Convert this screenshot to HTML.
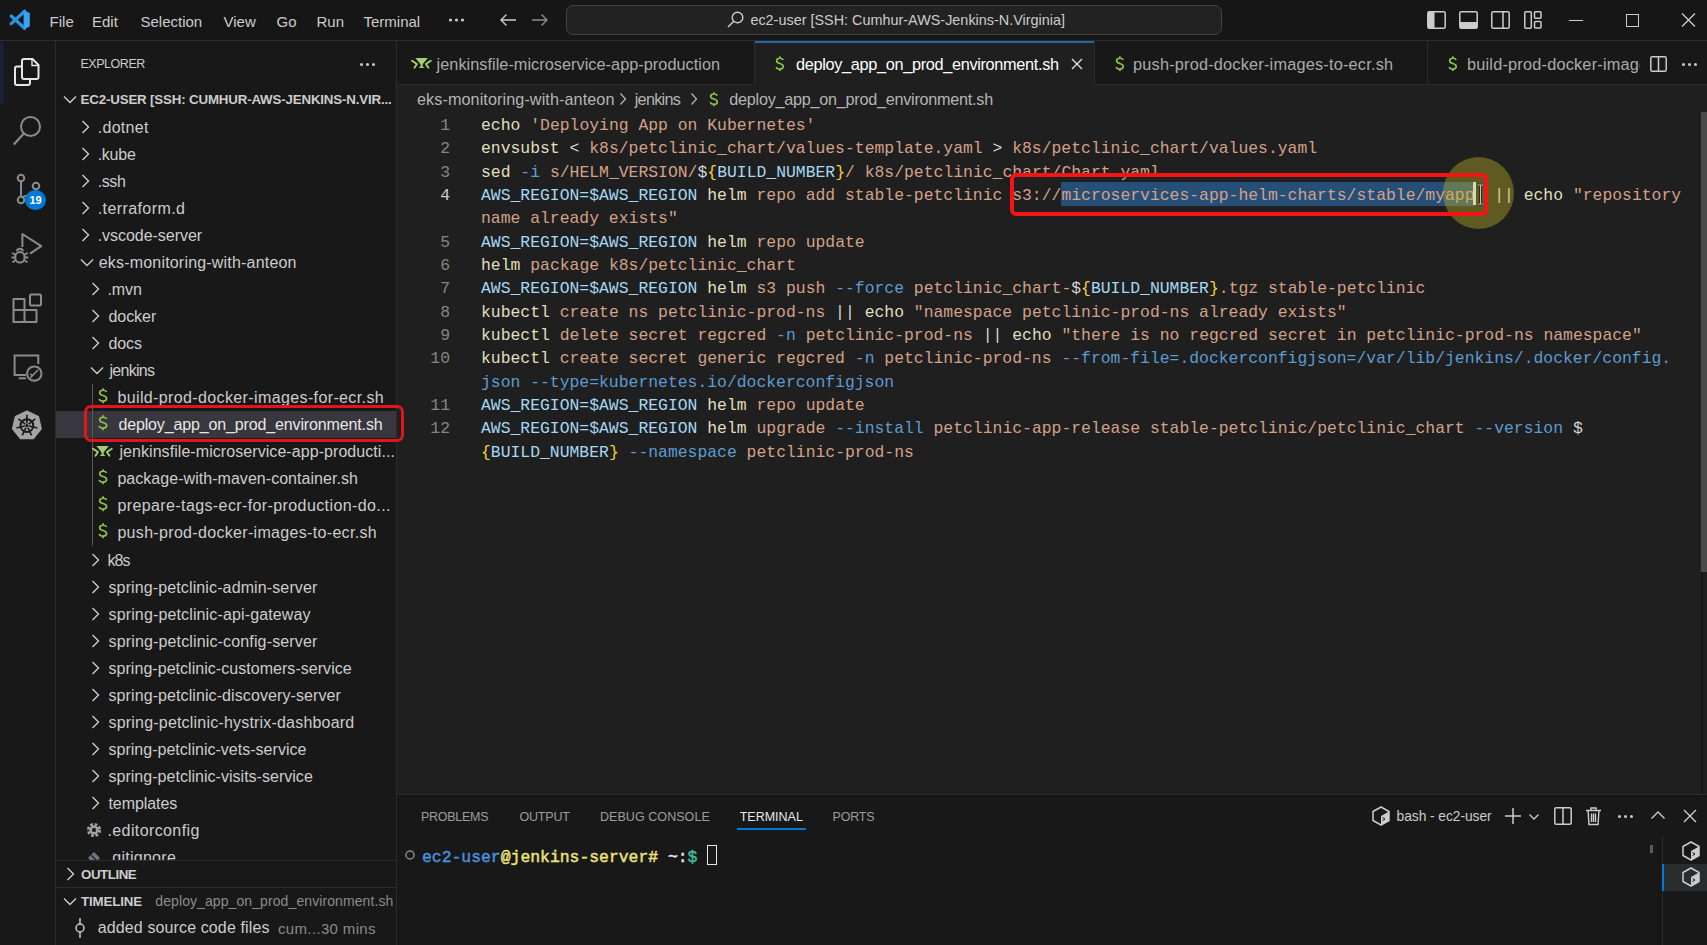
<!DOCTYPE html><html><head><meta charset="utf-8"><style>
*{margin:0;padding:0;box-sizing:border-box}
html,body{width:1707px;height:945px;overflow:hidden;background:#1f1f1f;font-family:"Liberation Sans",sans-serif;color:#cccccc}
.a{position:absolute;white-space:nowrap}
svg.a{overflow:visible}
#title{left:0;top:0;width:1707px;height:41px;background:#161616;border-bottom:1px solid #2b2b2b}
#act{left:0;top:41px;width:56px;height:904px;background:#181818;border-right:1px solid #2b2b2b}
#side{left:56px;top:41px;width:341px;height:904px;background:#181818;border-right:1px solid #2b2b2b}
#tabs{left:397px;top:41px;width:1310px;height:44px;background:#181818;border-bottom:1px solid #2b2b2b}
#panel{left:397px;top:794px;width:1310px;height:151px;background:#181818;border-top:1px solid #2e2e2e;box-shadow:inset 0 1px 0 #121212}
.menu{top:11px;font-size:15px;line-height:17px;color:#cccccc}
.code{font-family:"Liberation Mono",monospace;font-size:16.4px;line-height:23.36px;height:23.36px;white-space:pre}
.ln{color:#6e7681;text-align:right;width:60px;font-family:"Liberation Mono",monospace;font-size:16.4px;line-height:23.36px}
.tr{font-size:16px;line-height:20px;color:#cccccc;letter-spacing:0.15px}
.Y{color:#e0dfbe}.O{color:#d3a189}.B{color:#a4d8f4}.K{color:#5d9bd2}.W{color:#d8d8d8}.G{color:#f2d040}
.ptab{font-size:12.2px;line-height:14px;color:#9d9d9d;top:810px}
.tab{font-size:16.4px;line-height:20px;color:#ababab;top:54px}
.dl{color:#8dc149;font-size:16px;font-weight:bold}
</style></head><body>
<div id="title" class="a"></div><div id="act" class="a"></div><div id="side" class="a"></div><div id="tabs" class="a"></div><div id="panel" class="a"></div>
<svg class="a" style="left:0;top:0" width="45" height="40" viewBox="0 0 45 40"><path d="M24.6 11.2L11.2 23.6M11.2 16L24.6 28.3" stroke="#2d93e0" stroke-width="3.3" stroke-linecap="round"/><path d="M23.6 10.2L29.8 13.1V26.4L23.6 29.3Z" fill="#36a3f0"/></svg>
<div class="a " style='left:49.60px;top:11.70px;font-size:15px;line-height:19px;color:#cccccc'>File</div>
<div class="a " style='left:92.00px;top:11.70px;font-size:15px;line-height:19px;color:#cccccc'>Edit</div>
<div class="a " style='left:140.50px;top:11.70px;font-size:15px;line-height:19px;color:#cccccc'>Selection</div>
<div class="a " style='left:223.50px;top:11.70px;font-size:15px;line-height:19px;color:#cccccc'>View</div>
<div class="a " style='left:276.50px;top:11.70px;font-size:15px;line-height:19px;color:#cccccc'>Go</div>
<div class="a " style='left:316.50px;top:11.70px;font-size:15px;line-height:19px;color:#cccccc'>Run</div>
<div class="a " style='left:363.50px;top:11.70px;font-size:15px;line-height:19px;color:#cccccc'>Terminal</div>
<svg class="a" style="left:448px;top:17px" width="18" height="6"><circle cx="2.5" cy="3" r="1.6" fill="#ccc"/><circle cx="8.5" cy="3" r="1.6" fill="#ccc"/><circle cx="14.5" cy="3" r="1.6" fill="#ccc"/></svg>
<svg class="a" style="left:499px;top:13px" width="18" height="14" viewBox="0 0 18 14"><path d="M17 7H2M7.5 1.5L2 7l5.5 5.5" stroke="#cccccc" stroke-width="1.4" fill="none"/></svg>
<svg class="a" style="left:531px;top:13px" width="18" height="14" viewBox="0 0 18 14"><path d="M1 7h15M10.5 1.5L16 7l-5.5 5.5" stroke="#8a8a8a" stroke-width="1.4" fill="none"/></svg>
<div class="a" style="left:566px;top:5px;width:656px;height:30px;border:1.3px solid #424242;border-radius:7px;background:#222222"></div>
<svg class="a" style="left:727px;top:11px" width="17" height="17" viewBox="0 0 17 17"><circle cx="10.5" cy="6.5" r="5.3" stroke="#cccccc" stroke-width="1.4" fill="none"/><path d="M6.8 10.2L1 16" stroke="#cccccc" stroke-width="1.5"/></svg>
<div class="a " style='left:750.40px;top:11.31px;font-size:14.4px;line-height:18px;color:#cccccc;letter-spacing:0.007px'>ec2-user [SSH: Cumhur-AWS-Jenkins-N.Virginia]</div>
<svg class="a" style="left:1427px;top:11px" width="19" height="18" viewBox="0 0 19 18"><rect x="0.8" y="0.8" width="17.4" height="16.4" rx="1.5" stroke="#ccc" stroke-width="1.5" fill="none"/><rect x="1" y="1" width="6.5" height="16" fill="#ccc"/></svg>
<svg class="a" style="left:1459px;top:11px" width="19" height="18" viewBox="0 0 19 18"><rect x="0.8" y="0.8" width="17.4" height="16.4" rx="1.5" stroke="#ccc" stroke-width="1.5" fill="none"/><rect x="1" y="11" width="17" height="6" fill="#ccc"/></svg>
<svg class="a" style="left:1491px;top:11px" width="19" height="18" viewBox="0 0 19 18"><rect x="0.8" y="0.8" width="17.4" height="16.4" rx="1.5" stroke="#ccc" stroke-width="1.5" fill="none"/><path d="M12 1v16" stroke="#ccc" stroke-width="1.5"/></svg>
<svg class="a" style="left:1524px;top:11px" width="18" height="18" viewBox="0 0 18 18"><rect x="0.8" y="0.8" width="6.5" height="16.4" rx="1" stroke="#ccc" stroke-width="1.5" fill="none"/><rect x="10.5" y="0.8" width="6.5" height="6.5" rx="1" stroke="#ccc" stroke-width="1.5" fill="none"/><rect x="10.5" y="10.5" width="6.5" height="6.5" rx="1" stroke="#ccc" stroke-width="1.5" fill="none"/></svg>
<div class="a" style="left:1569px;top:20px;width:14px;height:1.3px;background:#ccc"></div>
<div class="a" style="left:1626px;top:13.5px;width:13px;height:13px;border:1.3px solid #ccc"></div>
<svg class="a" style="left:1681px;top:13px" width="15" height="14" viewBox="0 0 15 14"><path d="M1 0.5L14 13.5M14 0.5L1 13.5" stroke="#ccc" stroke-width="1.3"/></svg>
<div class="a" style="left:0;top:42px;width:5px;height:62px;background:linear-gradient(90deg,#15243d,#17202c 60%,#181818)"></div>
<svg class="a" style="left:13px;top:57px" width="28" height="30" viewBox="0 0 28 30"><path d="M9 20V4a2 2 0 0 1 2-2h8.5l6 6v12a2 2 0 0 1-2 2H11a2 2 0 0 1-2-2z" stroke="#e6e6e6" stroke-width="2" fill="none"/><path d="M19 2.5v6h6" stroke="#e6e6e6" stroke-width="1.4" fill="none"/><path d="M9 9.5H4a2 2 0 0 0-2 2V26a2 2 0 0 0 2 2h11a2 2 0 0 0 2-2v-4" stroke="#e6e6e6" stroke-width="2" fill="none"/></svg>
<svg class="a" style="left:13px;top:115px" width="30" height="32" viewBox="0 0 30 32"><circle cx="17.5" cy="11.5" r="9.5" stroke="#8b8b8b" stroke-width="2" fill="none"/><path d="M10.8 18.5L0.8 29.5" stroke="#8b8b8b" stroke-width="2.2"/></svg>
<svg class="a" style="left:15px;top:173px" width="30" height="32" viewBox="0 0 30 32"><circle cx="6" cy="5" r="3.3" stroke="#8b8b8b" stroke-width="2" fill="none"/><circle cx="6" cy="27" r="3.3" stroke="#8b8b8b" stroke-width="2" fill="none"/><circle cx="21" cy="13" r="3.3" stroke="#8b8b8b" stroke-width="2" fill="none"/><path d="M6 8.5v15M21 16.5c0 6-10 5-14 8" stroke="#8b8b8b" stroke-width="2" fill="none"/></svg>
<div class="a" style="left:25px;top:190px;width:21px;height:20px;border-radius:10px;background:#0078d4;color:#fff;font-size:11px;line-height:20px;text-align:center;font-weight:bold">19</div>
<svg class="a" style="left:0;top:225px" width="56" height="42" viewBox="0 0 56 42"><path d="M22.4 22V9L41.3 21.2L30 28.6" stroke="#8b8b8b" stroke-width="2" fill="none" stroke-linejoin="round"/><path d="M17 26.3c0-1.6 1.3-2.6 2.9-2.6s2.9 1 2.9 2.6" stroke="#8b8b8b" stroke-width="2" fill="none"/><rect x="15.3" y="27" width="9.2" height="10.6" rx="4.6" stroke="#8b8b8b" stroke-width="2" fill="none"/><path d="M12 28l3.4 1.6M27.8 28l-3.4 1.6M11.5 32.5h3.8M24.5 32.5h3.8M12.3 37.2l3-1.8M27.5 37.2l-3-1.8" stroke="#8b8b8b" stroke-width="1.8"/></svg>
<svg class="a" style="left:12px;top:292px" width="32" height="32" viewBox="0 0 32 32"><path d="M1.5 7h11v11h12v12H1.5z M1.5 18h11v12" stroke="#8b8b8b" stroke-width="2" fill="none" stroke-linejoin="round"/><rect x="18" y="2.5" width="11" height="11" rx="1" stroke="#8b8b8b" stroke-width="2" fill="none"/></svg>
<svg class="a" style="left:0;top:345px" width="56" height="45" viewBox="0 0 56 45"><path d="M26 30H14.6V10.5h23.7V19" stroke="#8b8b8b" stroke-width="2" fill="none"/><path d="M18.6 33.3H26" stroke="#8b8b8b" stroke-width="2"/><circle cx="34.3" cy="28.6" r="7.2" stroke="#8b8b8b" stroke-width="2" fill="none"/><path d="M30.5 32.5l7.5-7.5M30.3 28.8l2.2 1.8-2 2" stroke="#8b8b8b" stroke-width="1.6" fill="none"/></svg>
<svg class="a" style="left:0;top:400px" width="56" height="50" viewBox="0 0 56 50"><polygon points="26.90,11.29 38.31,16.68 41.13,28.78 33.23,38.49 20.57,38.49 12.67,28.78 15.49,16.68" fill="#a3a3a3" stroke="#a3a3a3" stroke-width="1.5" stroke-linejoin="round"/><circle cx="26.9" cy="25.600000000000023" r="6.4" stroke="#1a1a1a" stroke-width="2" fill="none"/><path d="M26.90 23.40L26.90 14.80M28.62 24.23L35.34 18.87M29.04 26.09L37.43 28.00M27.85 27.58L31.59 35.33M25.95 27.58L22.21 35.33M24.76 26.09L16.37 28.00M25.18 24.23L18.46 18.87" stroke="#1a1a1a" stroke-width="1.6"/><circle cx="26.9" cy="25.600000000000023" r="1.6" fill="#1a1a1a"/></svg>
<div class="a " style='left:80.40px;top:56.37px;font-size:12.5px;line-height:16px;color:#cccccc;letter-spacing:-0.450px'>EXPLORER</div>
<svg class="a" style="left:359px;top:62px" width="18" height="5"><circle cx="2.5" cy="2.5" r="1.5" fill="#ccc"/><circle cx="8.5" cy="2.5" r="1.5" fill="#ccc"/><circle cx="14.5" cy="2.5" r="1.5" fill="#ccc"/></svg>
<svg class="a" style="left:63px;top:95px" width="14" height="9" viewBox="0 0 14 9"><path d="M1 1.5l6 6 6-6" stroke="#cccccc" stroke-width="1.4" fill="none"/></svg>
<div class="a " style='left:80.60px;top:90.69px;font-size:13.3px;line-height:17px;color:#cccccc;font-weight:bold;letter-spacing:-0.160px'>EC2-USER [SSH: CUMHUR-AWS-JENKINS-N.VIR...</div>
<div class="a" style="left:56px;top:85px;width:340px;height:775px;overflow:hidden">
<div class="a" style="left:0;top:325.9px;width:340px;height:27px;background:#37373d"></div>
<div class="a" style="left:36px;top:298.9px;width:1px;height:162.2px;background:#585858"></div>
<svg class="a" style="left:25px;top:35.0px" width="9" height="14" viewBox="0 0 9 14"><path d="M1.5 1l6 6-6 6" stroke="#cccccc" stroke-width="1.4" fill="none"/></svg>
<div class="a " style='left:41.70px;top:32.86px;font-size:16px;line-height:20px;color:#cccccc;letter-spacing:0.303px'>.dotnet</div>
<svg class="a" style="left:25px;top:62.0px" width="9" height="14" viewBox="0 0 9 14"><path d="M1.5 1l6 6-6 6" stroke="#cccccc" stroke-width="1.4" fill="none"/></svg>
<div class="a " style='left:41.70px;top:59.90px;font-size:16px;line-height:20px;color:#cccccc;letter-spacing:-0.261px'>.kube</div>
<svg class="a" style="left:25px;top:89.1px" width="9" height="14" viewBox="0 0 9 14"><path d="M1.5 1l6 6-6 6" stroke="#cccccc" stroke-width="1.4" fill="none"/></svg>
<div class="a " style='left:41.70px;top:86.94px;font-size:16px;line-height:20px;color:#cccccc;letter-spacing:-0.382px'>.ssh</div>
<svg class="a" style="left:25px;top:116.1px" width="9" height="14" viewBox="0 0 9 14"><path d="M1.5 1l6 6-6 6" stroke="#cccccc" stroke-width="1.4" fill="none"/></svg>
<div class="a " style='left:41.70px;top:113.98px;font-size:16px;line-height:20px;color:#cccccc;letter-spacing:0.410px'>.terraform.d</div>
<svg class="a" style="left:25px;top:143.2px" width="9" height="14" viewBox="0 0 9 14"><path d="M1.5 1l6 6-6 6" stroke="#cccccc" stroke-width="1.4" fill="none"/></svg>
<div class="a " style='left:41.70px;top:141.02px;font-size:16px;line-height:20px;color:#cccccc;letter-spacing:-0.038px'>.vscode-server</div>
<svg class="a" style="left:24px;top:173.2px" width="14" height="9" viewBox="0 0 14 9"><path d="M1 1.5l6 6 6-6" stroke="#cccccc" stroke-width="1.4" fill="none"/></svg>
<div class="a " style='left:42.70px;top:168.06px;font-size:16px;line-height:20px;color:#cccccc;letter-spacing:0.193px'>eks-monitoring-with-anteon</div>
<svg class="a" style="left:35px;top:197.2px" width="9" height="14" viewBox="0 0 9 14"><path d="M1.5 1l6 6-6 6" stroke="#cccccc" stroke-width="1.4" fill="none"/></svg>
<div class="a " style='left:51.50px;top:195.10px;font-size:16px;line-height:20px;color:#cccccc;letter-spacing:-0.124px'>.mvn</div>
<svg class="a" style="left:35px;top:224.3px" width="9" height="14" viewBox="0 0 9 14"><path d="M1.5 1l6 6-6 6" stroke="#cccccc" stroke-width="1.4" fill="none"/></svg>
<div class="a " style='left:52.50px;top:222.14px;font-size:16px;line-height:20px;color:#cccccc;letter-spacing:-0.059px'>docker</div>
<svg class="a" style="left:35px;top:251.3px" width="9" height="14" viewBox="0 0 9 14"><path d="M1.5 1l6 6-6 6" stroke="#cccccc" stroke-width="1.4" fill="none"/></svg>
<div class="a " style='left:52.50px;top:249.18px;font-size:16px;line-height:20px;color:#cccccc;letter-spacing:-0.132px'>docs</div>
<svg class="a" style="left:34px;top:281.4px" width="14" height="9" viewBox="0 0 14 9"><path d="M1 1.5l6 6 6-6" stroke="#cccccc" stroke-width="1.4" fill="none"/></svg>
<div class="a " style='left:53.50px;top:276.22px;font-size:16px;line-height:20px;color:#cccccc;letter-spacing:-0.717px'>jenkins</div>
<svg class="a" style="left:41.5px;top:303.2px" width="10" height="15.5" viewBox="0 0 10 16" preserveAspectRatio="none"><path d="M8.6 4.2C8.1 2.9 6.8 2.3 5.1 2.3 3.1 2.3 1.7 3.3 1.7 4.9c0 1.6 1.3 2.3 3.4 2.9 2.2.6 3.5 1.4 3.5 3.1 0 1.7-1.4 2.7-3.6 2.7-1.9 0-3.3-.8-3.8-2.2M5.1 0.3v2M5.1 13.6v2.1" stroke="#8dc149" stroke-width="1.7" fill="none"/></svg>
<div class="a " style='left:61.40px;top:303.26px;font-size:16px;line-height:20px;color:#cccccc;letter-spacing:0.378px'>build-prod-docker-images-for-ecr.sh</div>
<svg class="a" style="left:41.5px;top:330.24px" width="10" height="15.5" viewBox="0 0 10 16" preserveAspectRatio="none"><path d="M8.6 4.2C8.1 2.9 6.8 2.3 5.1 2.3 3.1 2.3 1.7 3.3 1.7 4.9c0 1.6 1.3 2.3 3.4 2.9 2.2.6 3.5 1.4 3.5 3.1 0 1.7-1.4 2.7-3.6 2.7-1.9 0-3.3-.8-3.8-2.2M5.1 0.3v2M5.1 13.6v2.1" stroke="#8dc149" stroke-width="1.7" fill="none"/></svg>
<div class="a " style='left:62.40px;top:330.30px;font-size:16px;line-height:20px;color:#e7e7e7;letter-spacing:-0.136px'>deploy_app_on_prod_environment.sh</div>
<svg class="a" style="left:30.3px;top:352.98px" width="35" height="28" viewBox="0 0 35 28"><path d="M10.4 7.9H22.8L17.7 14.3V16.4L19.6 17.9H13.6L15.5 16.4V14.3Z" fill="#a2d070"/><path d="M7 10.7L11.9 14L9.5 17.8M25.8 10.7L20.9 14L23.4 17.8" stroke="#a2d070" stroke-width="1.9" fill="none" stroke-linecap="round" stroke-linejoin="round"/></svg>
<div class="a " style='left:63.40px;top:357.34px;font-size:16px;line-height:20px;color:#cccccc;letter-spacing:0.066px'>jenkinsfile-microservice-app-producti...</div>
<svg class="a" style="left:41.5px;top:384.32px" width="10" height="15.5" viewBox="0 0 10 16" preserveAspectRatio="none"><path d="M8.6 4.2C8.1 2.9 6.8 2.3 5.1 2.3 3.1 2.3 1.7 3.3 1.7 4.9c0 1.6 1.3 2.3 3.4 2.9 2.2.6 3.5 1.4 3.5 3.1 0 1.7-1.4 2.7-3.6 2.7-1.9 0-3.3-.8-3.8-2.2M5.1 0.3v2M5.1 13.6v2.1" stroke="#8dc149" stroke-width="1.7" fill="none"/></svg>
<div class="a " style='left:61.40px;top:384.38px;font-size:16px;line-height:20px;color:#cccccc;letter-spacing:0.042px'>package-with-maven-container.sh</div>
<svg class="a" style="left:41.5px;top:411.36px" width="10" height="15.5" viewBox="0 0 10 16" preserveAspectRatio="none"><path d="M8.6 4.2C8.1 2.9 6.8 2.3 5.1 2.3 3.1 2.3 1.7 3.3 1.7 4.9c0 1.6 1.3 2.3 3.4 2.9 2.2.6 3.5 1.4 3.5 3.1 0 1.7-1.4 2.7-3.6 2.7-1.9 0-3.3-.8-3.8-2.2M5.1 0.3v2M5.1 13.6v2.1" stroke="#8dc149" stroke-width="1.7" fill="none"/></svg>
<div class="a " style='left:61.40px;top:411.42px;font-size:16px;line-height:20px;color:#cccccc;letter-spacing:0.396px'>prepare-tags-ecr-for-production-do...</div>
<svg class="a" style="left:41.5px;top:438.3999999999999px" width="10" height="15.5" viewBox="0 0 10 16" preserveAspectRatio="none"><path d="M8.6 4.2C8.1 2.9 6.8 2.3 5.1 2.3 3.1 2.3 1.7 3.3 1.7 4.9c0 1.6 1.3 2.3 3.4 2.9 2.2.6 3.5 1.4 3.5 3.1 0 1.7-1.4 2.7-3.6 2.7-1.9 0-3.3-.8-3.8-2.2M5.1 0.3v2M5.1 13.6v2.1" stroke="#8dc149" stroke-width="1.7" fill="none"/></svg>
<div class="a " style='left:61.40px;top:438.46px;font-size:16px;line-height:20px;color:#cccccc;letter-spacing:0.322px'>push-prod-docker-images-to-ecr.sh</div>
<svg class="a" style="left:35px;top:467.6px" width="9" height="14" viewBox="0 0 9 14"><path d="M1.5 1l6 6-6 6" stroke="#cccccc" stroke-width="1.4" fill="none"/></svg>
<div class="a " style='left:51.50px;top:465.50px;font-size:16px;line-height:20px;color:#cccccc;letter-spacing:-0.899px'>k8s</div>
<svg class="a" style="left:35px;top:494.7px" width="9" height="14" viewBox="0 0 9 14"><path d="M1.5 1l6 6-6 6" stroke="#cccccc" stroke-width="1.4" fill="none"/></svg>
<div class="a " style='left:52.50px;top:492.54px;font-size:16px;line-height:20px;color:#cccccc;letter-spacing:0.122px'>spring-petclinic-admin-server</div>
<svg class="a" style="left:35px;top:521.7px" width="9" height="14" viewBox="0 0 9 14"><path d="M1.5 1l6 6-6 6" stroke="#cccccc" stroke-width="1.4" fill="none"/></svg>
<div class="a " style='left:52.50px;top:519.58px;font-size:16px;line-height:20px;color:#cccccc;letter-spacing:0.140px'>spring-petclinic-api-gateway</div>
<svg class="a" style="left:35px;top:548.8px" width="9" height="14" viewBox="0 0 9 14"><path d="M1.5 1l6 6-6 6" stroke="#cccccc" stroke-width="1.4" fill="none"/></svg>
<div class="a " style='left:52.50px;top:546.62px;font-size:16px;line-height:20px;color:#cccccc;letter-spacing:0.149px'>spring-petclinic-config-server</div>
<svg class="a" style="left:35px;top:575.8px" width="9" height="14" viewBox="0 0 9 14"><path d="M1.5 1l6 6-6 6" stroke="#cccccc" stroke-width="1.4" fill="none"/></svg>
<div class="a " style='left:52.50px;top:573.66px;font-size:16px;line-height:20px;color:#cccccc;letter-spacing:0.041px'>spring-petclinic-customers-service</div>
<svg class="a" style="left:35px;top:602.8px" width="9" height="14" viewBox="0 0 9 14"><path d="M1.5 1l6 6-6 6" stroke="#cccccc" stroke-width="1.4" fill="none"/></svg>
<div class="a " style='left:52.50px;top:600.70px;font-size:16px;line-height:20px;color:#cccccc;letter-spacing:0.092px'>spring-petclinic-discovery-server</div>
<svg class="a" style="left:35px;top:629.9px" width="9" height="14" viewBox="0 0 9 14"><path d="M1.5 1l6 6-6 6" stroke="#cccccc" stroke-width="1.4" fill="none"/></svg>
<div class="a " style='left:52.50px;top:627.74px;font-size:16px;line-height:20px;color:#cccccc;letter-spacing:0.197px'>spring-petclinic-hystrix-dashboard</div>
<svg class="a" style="left:35px;top:656.9px" width="9" height="14" viewBox="0 0 9 14"><path d="M1.5 1l6 6-6 6" stroke="#cccccc" stroke-width="1.4" fill="none"/></svg>
<div class="a " style='left:52.50px;top:654.78px;font-size:16px;line-height:20px;color:#cccccc;letter-spacing:0.018px'>spring-petclinic-vets-service</div>
<svg class="a" style="left:35px;top:684.0px" width="9" height="14" viewBox="0 0 9 14"><path d="M1.5 1l6 6-6 6" stroke="#cccccc" stroke-width="1.4" fill="none"/></svg>
<div class="a " style='left:52.50px;top:681.82px;font-size:16px;line-height:20px;color:#cccccc;letter-spacing:0.023px'>spring-petclinic-visits-service</div>
<svg class="a" style="left:35px;top:711.0px" width="9" height="14" viewBox="0 0 9 14"><path d="M1.5 1l6 6-6 6" stroke="#cccccc" stroke-width="1.4" fill="none"/></svg>
<div class="a " style='left:52.50px;top:708.86px;font-size:16px;line-height:20px;color:#cccccc;letter-spacing:-0.071px'>templates</div>
<svg class="a" style="left:30px;top:737.0px" width="16" height="16" viewBox="0 0 16 16"><circle cx="8" cy="8" r="5.6" fill="none" stroke="#9aa4a4" stroke-width="3" stroke-dasharray="2.6 1.8"/><circle cx="8" cy="8" r="4.6" fill="#9aa4a4"/><rect x="6.2" y="6.2" width="3.6" height="3.6" fill="#181818"/></svg>
<div class="a " style='left:51.50px;top:735.90px;font-size:16px;line-height:20px;color:#cccccc;letter-spacing:0.386px'>.editorconfig</div>
<svg class="a" style="left:30px;top:765.1px" width="16" height="14" viewBox="0 0 16 14"><path d="M2 8l6-6 6 6-6 6z" fill="#6b7785"/><path d="M5.5 5.5l5 5" stroke="#1a1a1a" stroke-width="1.3"/></svg>
<div class="a " style='left:51.50px;top:762.94px;font-size:16px;line-height:20px;color:#cccccc;letter-spacing:0.275px'>.gitignore</div>
</div>
<div class="a" style="left:84px;top:404.5px;width:320px;height:37.5px;border:3.6px solid #e3141b;border-radius:7px"></div>
<div class="a" style="left:56px;top:860px;width:340px;height:1px;background:#2b2b2b"></div>
<div class="a" style="left:56px;top:887px;width:340px;height:1px;background:#2b2b2b"></div>
<svg class="a" style="left:66px;top:867px" width="9" height="14" viewBox="0 0 9 14"><path d="M1.5 1l6 6-6 6" stroke="#cccccc" stroke-width="1.4" fill="none"/></svg>
<div class="a " style='left:81.00px;top:866.29px;font-size:13.3px;line-height:17px;color:#cccccc;font-weight:bold;letter-spacing:-0.448px'>OUTLINE</div>
<svg class="a" style="left:63px;top:897px" width="14" height="9" viewBox="0 0 14 9"><path d="M1 1.5l6 6 6-6" stroke="#cccccc" stroke-width="1.4" fill="none"/></svg>
<div class="a " style='left:81.00px;top:893.29px;font-size:13.3px;line-height:17px;color:#cccccc;font-weight:bold;letter-spacing:-0.140px'>TIMELINE</div>
<div class="a " style='left:155.30px;top:892.35px;font-size:14px;line-height:18px;color:#8b8b8b;letter-spacing:0.091px'>deploy_app_on_prod_environment.sh</div>
<svg class="a" style="left:72px;top:918px" width="16" height="20" viewBox="0 0 16 20"><circle cx="8" cy="10" r="4" stroke="#ccc" stroke-width="1.5" fill="none"/><path d="M8 0v6M8 14v6" stroke="#ccc" stroke-width="1.5"/></svg>
<div class="a " style='left:97.80px;top:917.66px;font-size:16px;line-height:20px;color:#cccccc;letter-spacing:0.118px'>added source code files</div>
<div class="a " style='left:278.00px;top:918.50px;font-size:15px;line-height:19px;color:#8b8b8b;letter-spacing:0.345px'>cum...30 mins</div>
<svg class="a" style="left:405px;top:50px" width="35" height="28" viewBox="0 0 35 28"><path d="M10.4 7.9H22.8L17.7 14.3V16.4L19.6 17.9H13.6L15.5 16.4V14.3Z" fill="#a2d070"/><path d="M7 10.7L11.9 14L9.5 17.8M25.8 10.7L20.9 14L23.4 17.8" stroke="#a2d070" stroke-width="1.9" fill="none" stroke-linecap="round" stroke-linejoin="round"/></svg>
<div class="a " style='left:436.60px;top:53.95px;font-size:16.3px;line-height:20px;color:#ababab;letter-spacing:0.030px'>jenkinsfile-microservice-app-production</div>
<div class="a" style="left:754px;top:41px;width:1px;height:44px;background:#2b2b2b"></div>
<div class="a" style="left:755px;top:41px;width:339px;height:44px;background:#1f1f1f"></div>
<div class="a" style="left:755px;top:41px;width:339px;height:1.5px;background:#2068a8"></div>
<div class="a" style="left:1094px;top:41px;width:1px;height:44px;background:#2b2b2b"></div>
<div class="a" style="left:1427px;top:41px;width:1px;height:44px;background:#2b2b2b"></div>
<svg class="a" style="left:775.4px;top:56px" width="9.6" height="15.4" viewBox="0 0 10 16" preserveAspectRatio="none"><path d="M8.6 4.2C8.1 2.9 6.8 2.3 5.1 2.3 3.1 2.3 1.7 3.3 1.7 4.9c0 1.6 1.3 2.3 3.4 2.9 2.2.6 3.5 1.4 3.5 3.1 0 1.7-1.4 2.7-3.6 2.7-1.9 0-3.3-.8-3.8-2.2M5.1 0.3v2M5.1 13.6v2.1" stroke="#8dc149" stroke-width="1.7" fill="none"/></svg>
<div class="a " style='left:796.00px;top:53.95px;font-size:16.3px;line-height:20px;color:#ffffff;letter-spacing:-0.322px'>deploy_app_on_prod_environment.sh</div>
<svg class="a" style="left:1071px;top:58px" width="12" height="12" viewBox="0 0 12 12"><path d="M1 1l10 10M11 1L1 11" stroke="#e0e0e0" stroke-width="1.4"/></svg>
<svg class="a" style="left:1114.5px;top:56px" width="9.6" height="15.4" viewBox="0 0 10 16" preserveAspectRatio="none"><path d="M8.6 4.2C8.1 2.9 6.8 2.3 5.1 2.3 3.1 2.3 1.7 3.3 1.7 4.9c0 1.6 1.3 2.3 3.4 2.9 2.2.6 3.5 1.4 3.5 3.1 0 1.7-1.4 2.7-3.6 2.7-1.9 0-3.3-.8-3.8-2.2M5.1 0.3v2M5.1 13.6v2.1" stroke="#8dc149" stroke-width="1.7" fill="none"/></svg>
<div class="a " style='left:1133.00px;top:53.95px;font-size:16.3px;line-height:20px;color:#ababab;letter-spacing:0.209px'>push-prod-docker-images-to-ecr.sh</div>
<svg class="a" style="left:1447.5px;top:56px" width="9.6" height="15.4" viewBox="0 0 10 16" preserveAspectRatio="none"><path d="M8.6 4.2C8.1 2.9 6.8 2.3 5.1 2.3 3.1 2.3 1.7 3.3 1.7 4.9c0 1.6 1.3 2.3 3.4 2.9 2.2.6 3.5 1.4 3.5 3.1 0 1.7-1.4 2.7-3.6 2.7-1.9 0-3.3-.8-3.8-2.2M5.1 0.3v2M5.1 13.6v2.1" stroke="#8dc149" stroke-width="1.7" fill="none"/></svg>
<div class="a" style="left:1468px;top:41px;width:172px;height:44px;overflow:hidden"><div class="a " style='left:-1.00px;top:12.95px;font-size:16.3px;line-height:20px;color:#ababab;letter-spacing:0.21px'>build-prod-docker-images-for-ecr.sh</div></div>
<div class="a" style="left:1640px;top:41px;width:67px;height:43px;background:#181818"></div>
<svg class="a" style="left:1650px;top:56px" width="17" height="16" viewBox="0 0 17 16"><rect x="0.8" y="0.8" width="15.4" height="14.4" rx="1.5" stroke="#ccc" stroke-width="1.5" fill="none"/><path d="M8.5 1v14" stroke="#ccc" stroke-width="1.5"/></svg>
<svg class="a" style="left:1681px;top:62px" width="18" height="5"><circle cx="2.5" cy="2.5" r="1.5" fill="#ccc"/><circle cx="8.5" cy="2.5" r="1.5" fill="#ccc"/><circle cx="14.5" cy="2.5" r="1.5" fill="#ccc"/></svg>
<div class="a " style='left:417.00px;top:88.89px;font-size:16.2px;line-height:20px;color:#b4b4b4;letter-spacing:0.087px'>eks-monitoring-with-anteon</div>
<svg class="a" style="left:619px;top:92px" width="8" height="14" viewBox="0 0 8 14"><path d="M1.5 1.5l5 5.5-5 5.5" stroke="#b4b4b4" stroke-width="1.3" fill="none"/></svg>
<div class="a " style='left:634.70px;top:88.89px;font-size:16.2px;line-height:20px;color:#b4b4b4;letter-spacing:-0.699px'>jenkins</div>
<svg class="a" style="left:690px;top:92px" width="8" height="14" viewBox="0 0 8 14"><path d="M1.5 1.5l5 5.5-5 5.5" stroke="#b4b4b4" stroke-width="1.3" fill="none"/></svg>
<svg class="a" style="left:709px;top:91.5px" width="9.6" height="14.5" viewBox="0 0 10 16" preserveAspectRatio="none"><path d="M8.6 4.2C8.1 2.9 6.8 2.3 5.1 2.3 3.1 2.3 1.7 3.3 1.7 4.9c0 1.6 1.3 2.3 3.4 2.9 2.2.6 3.5 1.4 3.5 3.1 0 1.7-1.4 2.7-3.6 2.7-1.9 0-3.3-.8-3.8-2.2M5.1 0.3v2M5.1 13.6v2.1" stroke="#8dc149" stroke-width="1.7" fill="none"/></svg>
<div class="a " style='left:729.30px;top:88.89px;font-size:16.2px;line-height:20px;color:#b4b4b4;letter-spacing:-0.247px'>deploy_app_on_prod_environment.sh</div>
<div class="a" style="left:1061px;top:182px;width:412.5px;height:23.6px;background:#264f78"></div>
<div class="a ln" style="left:390px;top:113.80px;color:#858585">1</div>
<div class="a code" style="left:481px;top:113.80px"><span class="Y">echo</span><span class="W"> </span><span class="O">'Deploying App on Kubernetes'</span></div>
<div class="a ln" style="left:390px;top:137.16px;color:#858585">2</div>
<div class="a code" style="left:481px;top:137.16px"><span class="Y">envsubst</span><span class="W"> &lt; </span><span class="O">k8s/petclinic_chart/values-template.yaml</span><span class="W"> &gt; </span><span class="O">k8s/petclinic_chart/values.yaml</span></div>
<div class="a ln" style="left:390px;top:160.52px;color:#858585">3</div>
<div class="a code" style="left:481px;top:160.52px"><span class="Y">sed</span><span class="W"> </span><span class="K">-i</span><span class="W"> </span><span class="O">s/HELM_VERSION/</span><span class="W">$</span><span class="G">{</span><span class="B">BUILD_NUMBER</span><span class="G">}</span><span class="O">/ k8s/petclinic_chart/Chart.yaml</span></div>
<div class="a ln" style="left:390px;top:183.88px;color:#cccccc">4</div>
<div class="a code" style="left:481px;top:183.88px"><span class="B">AWS_REGION=$AWS_REGION</span><span class="W"> </span><span class="Y">helm</span><span class="W"> </span><span class="O">repo add stable-petclinic s3://</span><span class="O">microservices-app-helm-charts/stable/myapp</span><span class="W">  || </span><span class="Y">echo</span><span class="W"> </span><span class="O">"repository</span></div>
<div class="a code" style="left:481px;top:207.24px"><span class="O">name already exists"</span></div>
<div class="a ln" style="left:390px;top:230.60px;color:#858585">5</div>
<div class="a code" style="left:481px;top:230.60px"><span class="B">AWS_REGION=$AWS_REGION</span><span class="W"> </span><span class="Y">helm</span><span class="W"> </span><span class="O">repo update</span></div>
<div class="a ln" style="left:390px;top:253.96px;color:#858585">6</div>
<div class="a code" style="left:481px;top:253.96px"><span class="Y">helm</span><span class="W"> </span><span class="O">package k8s/petclinic_chart</span></div>
<div class="a ln" style="left:390px;top:277.32px;color:#858585">7</div>
<div class="a code" style="left:481px;top:277.32px"><span class="B">AWS_REGION=$AWS_REGION</span><span class="W"> </span><span class="Y">helm</span><span class="W"> </span><span class="O">s3 push </span><span class="K">--force</span><span class="O"> petclinic_chart-</span><span class="W">$</span><span class="G">{</span><span class="B">BUILD_NUMBER</span><span class="G">}</span><span class="O">.tgz stable-petclinic</span></div>
<div class="a ln" style="left:390px;top:300.68px;color:#858585">8</div>
<div class="a code" style="left:481px;top:300.68px"><span class="Y">kubectl</span><span class="W"> </span><span class="O">create ns petclinic-prod-ns</span><span class="W"> || </span><span class="Y">echo</span><span class="W"> </span><span class="O">"namespace petclinic-prod-ns already exists"</span></div>
<div class="a ln" style="left:390px;top:324.04px;color:#858585">9</div>
<div class="a code" style="left:481px;top:324.04px"><span class="Y">kubectl</span><span class="W"> </span><span class="O">delete secret regcred </span><span class="K">-n</span><span class="O"> petclinic-prod-ns</span><span class="W"> || </span><span class="Y">echo</span><span class="W"> </span><span class="O">"there is no regcred secret in petclinic-prod-ns namespace"</span></div>
<div class="a ln" style="left:390px;top:347.40px;color:#858585">10</div>
<div class="a code" style="left:481px;top:347.40px"><span class="Y">kubectl</span><span class="W"> </span><span class="O">create secret generic regcred </span><span class="K">-n</span><span class="O"> petclinic-prod-ns </span><span class="K">--from-file=.dockerconfigjson=/var/lib/jenkins/.docker/config.</span></div>
<div class="a code" style="left:481px;top:370.76px"><span class="K">json --type=kubernetes.io/dockerconfigjson</span></div>
<div class="a ln" style="left:390px;top:394.12px;color:#858585">11</div>
<div class="a code" style="left:481px;top:394.12px"><span class="B">AWS_REGION=$AWS_REGION</span><span class="W"> </span><span class="Y">helm</span><span class="W"> </span><span class="O">repo update</span></div>
<div class="a ln" style="left:390px;top:417.48px;color:#858585">12</div>
<div class="a code" style="left:481px;top:417.48px"><span class="B">AWS_REGION=$AWS_REGION</span><span class="W"> </span><span class="Y">helm</span><span class="W"> </span><span class="O">upgrade </span><span class="K">--install</span><span class="O"> petclinic-app-release stable-petclinic/petclinic_chart </span><span class="K">--version</span><span class="W"> $</span></div>
<div class="a code" style="left:481px;top:440.84px"><span class="G">{</span><span class="B">BUILD_NUMBER</span><span class="G">}</span><span class="W"> </span><span class="K">--namespace</span><span class="O"> petclinic-prod-ns</span></div>
<div class="a" style="left:1442.5px;top:156.5px;width:71.5px;height:72.5px;border-radius:50%;background:rgba(200,185,40,0.38)"></div>
<div class="a" style="left:1009.9px;top:173.3px;width:478.1px;height:42.4px;border:4.6px solid #f51414;border-radius:6px"></div>
<div class="a" style="left:1473.3px;top:182.4px;width:2.7px;height:23px;background:#d8d8b0"></div>
<svg class="a" style="left:1476px;top:184px" width="9" height="21" viewBox="0 0 9 21"><path d="M1.5 1h6M4.5 1v19M1.5 20h6" stroke="#222" stroke-width="2.6"/><path d="M1.5 1h6M4.5 1v19M1.5 20h6" stroke="#c8c8b8" stroke-width="1"/></svg>
<div class="a" style="left:1701px;top:112px;width:6px;height:460px;background:#4a4a4a"></div>
<div class="a" style="left:1701px;top:572px;width:1.6px;height:222px;background:#141414"></div>
<div class="a " style='left:420.90px;top:809.47px;font-size:12.5px;line-height:16px;color:#9d9d9d;letter-spacing:-0.247px'>PROBLEMS</div>
<div class="a " style='left:519.40px;top:809.47px;font-size:12.5px;line-height:16px;color:#9d9d9d;letter-spacing:-0.170px'>OUTPUT</div>
<div class="a " style='left:600.00px;top:809.47px;font-size:12.5px;line-height:16px;color:#9d9d9d;letter-spacing:0.057px'>DEBUG CONSOLE</div>
<div class="a " style='left:739.70px;top:809.47px;font-size:12.5px;line-height:16px;color:#e7e7e7;letter-spacing:-0.007px'>TERMINAL</div>
<div class="a " style='left:832.50px;top:809.47px;font-size:12.5px;line-height:16px;color:#9d9d9d;letter-spacing:-0.199px'>PORTS</div>
<div class="a" style="left:737px;top:828px;width:69px;height:1.5px;background:#0078d4"></div>
<svg class="a" style="left:404px;top:849px" width="12" height="12" viewBox="0 0 12 12"><circle cx="6" cy="6" r="4" stroke="#8b8b8b" stroke-width="1.5" fill="none"/></svg>
<div class="a" style="left:422px;top:847.5px;font-family:'Liberation Mono',monospace;font-size:16.4px;line-height:20px;white-space:pre;-webkit-text-stroke:0.45px"><span style="color:#4a90dc;-webkit-text-stroke-color:#4a90dc">ec2-user</span><span style="color:#ebe37a;-webkit-text-stroke-color:#ebe37a">@jenkins-server#</span><span style="color:#e5e5e5;-webkit-text-stroke-color:#e5e5e5"> ~:</span><span style="color:#3cc0a0;-webkit-text-stroke-color:#3cc0a0">$</span></div>
<div class="a" style="left:707px;top:845px;width:10px;height:20px;border:1.5px solid #e5e5e5"></div>
<svg class="a" style="left:1372px;top:806px" width="18" height="20" viewBox="0 0 18 20"><path d="M9 1L17 5.5v9L9 19 1 14.5v-9z" stroke="#cccccc" stroke-width="1.5" fill="none" stroke-linejoin="round"/><path d="M9 10V19L17 14.5v-9z" fill="#cccccc"/><path d="M10.5 11.5l2.5 1.5-2.5 1.5" stroke="#181818" stroke-width="1" fill="none"/></svg>
<div class="a " style='left:1396.60px;top:808.42px;font-size:13.8px;line-height:17px;color:#cccccc;letter-spacing:-0.062px'>bash - ec2-user</div>
<svg class="a" style="left:1504px;top:807px" width="18" height="18" viewBox="0 0 18 18"><path d="M9 1v16M1 9h16" stroke="#ccc" stroke-width="1.5"/></svg>
<svg class="a" style="left:1528px;top:813px" width="12" height="8" viewBox="0 0 12 8"><path d="M1.5 1.5l4.5 4.5 4.5-4.5" stroke="#ccc" stroke-width="1.3" fill="none"/></svg>
<svg class="a" style="left:1554px;top:807px" width="18" height="18" viewBox="0 0 18 18"><rect x="0.8" y="0.8" width="16.4" height="16.4" rx="1.5" stroke="#ccc" stroke-width="1.5" fill="none"/><path d="M9 1v16" stroke="#ccc" stroke-width="1.5"/></svg>
<svg class="a" style="left:1585px;top:806px" width="17" height="20" viewBox="0 0 17 20"><path d="M1 4.5h15M6 4.5V2h5v2.5M3 4.5l1 14h9l1-14M6.5 7.5v8.5M8.5 7.5v8.5M10.5 7.5v8.5" stroke="#ccc" stroke-width="1.4" fill="none"/></svg>
<svg class="a" style="left:1617px;top:814px" width="18" height="5"><circle cx="2.5" cy="2.5" r="1.5" fill="#ccc"/><circle cx="8.5" cy="2.5" r="1.5" fill="#ccc"/><circle cx="14.5" cy="2.5" r="1.5" fill="#ccc"/></svg>
<svg class="a" style="left:1650px;top:810px" width="16" height="10" viewBox="0 0 16 10"><path d="M1.5 8.5l6.5-6.5 6.5 6.5" stroke="#ccc" stroke-width="1.4" fill="none"/></svg>
<svg class="a" style="left:1683px;top:809px" width="14" height="14" viewBox="0 0 14 14"><path d="M1 1l12 12M13 1L1 13" stroke="#ccc" stroke-width="1.4"/></svg>
<div class="a" style="left:1662px;top:836px;width:1px;height:109px;background:#2b2b2b"></div>
<div class="a" style="left:1663px;top:864px;width:44px;height:27px;background:#2a2d2e"></div>
<div class="a" style="left:1662px;top:864px;width:2px;height:27px;background:#0078d4"></div>
<svg class="a" style="left:1682px;top:841px" width="18" height="20" viewBox="0 0 18 20"><path d="M9 1L17 5.5v9L9 19 1 14.5v-9z" stroke="#cccccc" stroke-width="1.5" fill="none" stroke-linejoin="round"/><path d="M9 10V19L17 14.5v-9z" fill="#cccccc"/><path d="M10.5 11.5l2.5 1.5-2.5 1.5" stroke="#181818" stroke-width="1" fill="none"/></svg>
<svg class="a" style="left:1682px;top:867px" width="18" height="20" viewBox="0 0 18 20"><path d="M9 1L17 5.5v9L9 19 1 14.5v-9z" stroke="#cccccc" stroke-width="1.5" fill="none" stroke-linejoin="round"/><path d="M9 10V19L17 14.5v-9z" fill="#cccccc"/><path d="M10.5 11.5l2.5 1.5-2.5 1.5" stroke="#181818" stroke-width="1" fill="none"/></svg>
<div class="a" style="left:1650px;top:845px;width:3px;height:8px;background:#5a5a5a"></div>
</body></html>
